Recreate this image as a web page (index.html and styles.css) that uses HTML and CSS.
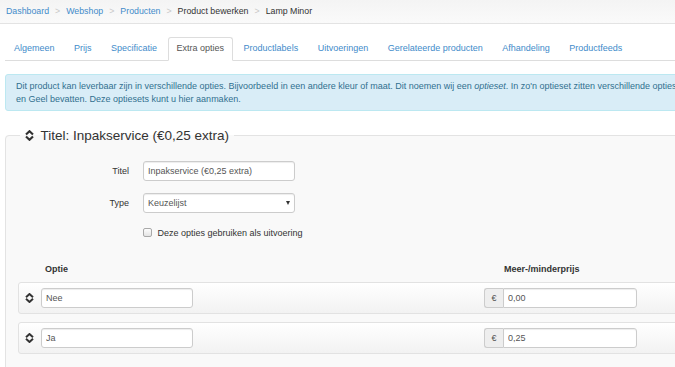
FILE: index.html
```html
<!DOCTYPE html>
<html lang="nl">
    <head>
        <meta charset="UTF-8" />
        <title>Product bewerken - Lamp Minor</title>

        <link rel="stylesheet" href="styles.css">
    </head>
    <body>
        <div class="kruimels">
            <a href="#">Dashboard</a><span class="scheiding">&gt;</span>
            <a href="#">Webshop</a><span class="scheiding">&gt;</span>
            <a href="#">Producten</a><span class="scheiding">&gt;</span>
            <span>Product bewerken</span><span class="scheiding">&gt;</span>
            <span>Lamp Minor</span>
        </div>

        <div class="pagina">
            <ul class="tabs">
                <li><a href="#">Algemeen</a></li>
                <li><a href="#">Prijs</a></li>
                <li><a href="#">Specificatie</a></li>
                <li class="actief"><a href="#">Extra opties</a></li>
                <li><a href="#">Productlabels</a></li>
                <li><a href="#">Uitvoeringen</a></li>
                <li><a href="#">Gerelateerde producten</a></li>
                <li><a href="#">Afhandeling</a></li>
                <li><a href="#">Productfeeds</a></li>
            </ul>

            <div class="melding">
                Dit product kan leverbaar zijn in verschillende opties. Bijvoorbeeld in een andere kleur of maat. Dit noemen wij een <em>optieset</em>. In zo'n optieset zitten verschillende opties, zo kan een optieset Kleur de opties Rood, Groen<br>
                en Geel bevatten. Deze optiesets kunt u hier aanmaken.
            </div>

            <fieldset class="optieset">
                <legend>
                    <svg class="greep groot" viewBox="0 0 9 11" width="9" height="11"><path d="M1 4.6 4.5 1.2 8 4.6M1 6.4 4.5 9.8 8 6.4" fill="none" stroke="#333" stroke-width="2.1"/></svg>Titel: Inpakservice (€0,25 extra)
                </legend>

                <div class="veld">
                    <label for="titel">Titel</label>
                    <input id="titel" type="text" value="Inpakservice (€0,25 extra)">
                </div>
                <div class="veld">
                    <label for="type">Type</label>
                    <span class="keuze">
                        <select id="type">
                            <option>Keuzelijst</option>
                            <option>Keuzerondjes</option>
                        </select>
                    </span>
                </div>
                <div class="vinkje">
                    <label><input type="checkbox"> Deze opties gebruiken als uitvoering</label>
                </div>

                <div class="regel kop">
                    <span></span>
                    <span class="kop-optie">Optie</span>
                    <span class="kop-prijs">Meer-/minderprijs</span>
                </div>

                <div class="regel optie">
                    <svg class="greep" viewBox="0 0 9 10" width="9" height="10"><path d="M1 4.2 4.5 1 8 4.2M1 5.8 4.5 9 8 5.8" fill="none" stroke="#333" stroke-width="2"/></svg>
                    <input type="text" value="Nee">
                    <div class="prijs"><span class="valuta">€</span><input type="text" value="0,00"></div>
                </div>
                <div class="regel optie">
                    <svg class="greep" viewBox="0 0 9 10" width="9" height="10"><path d="M1 4.2 4.5 1 8 4.2M1 5.8 4.5 9 8 5.8" fill="none" stroke="#333" stroke-width="2"/></svg>
                    <input type="text" value="Ja">
                    <div class="prijs"><span class="valuta">€</span><input type="text" value="0,25"></div>
                </div>
            </fieldset>
        </div>
    </body>
</html>
```

FILE: styles.css
```css
html {
    overflow: hidden;
}

body {
    margin: 0;
    width: 1000px;
    font-family: "Liberation Sans", Arial, sans-serif;
    font-size: 9px;
    line-height: 13px;
    color: #333;
    background: #fff;
}

a {
    color: #428bca;
    text-decoration: none;
}

/* kruimelpad */
.kruimels {
    display: flex;
    height: 23px;
    line-height: 23px;
    padding: 0 6px;
    font-size: 8.8px;
    background: linear-gradient(#f4f4f4, #fafafa);
    border-bottom: 1px solid #e3e3e3;
    white-space: nowrap;
}
.scheiding {
    color: #c8c8c8;
    padding: 0 6px;
}

.pagina {
    padding: 0 5px;
}

/* tabs */
.tabs {
    display: flex;
    list-style: none;
    margin: 13px 0 0;
    padding: 0;
    border-bottom: 1px solid #ddd;
}
.tabs li {
    margin: 0 1.5px -1px 0;
}
.tabs a {
    display: block;
    padding: 4px 8px 5px;
    border: 1px solid transparent;
    border-radius: 3px 3px 0 0;
}
.tabs .actief a {
    color: #555;
    background: #fff;
    border-color: #ddd #ddd #fff;
}

/* melding */
.melding {
    margin-top: 13px;
    padding: 5px 10px 4px;
    background: #d9edf7;
    border: 1px solid #bce8f1;
    border-radius: 3px;
    color: #31708f;
    white-space: nowrap;
}

/* optieset */
.optieset {
    margin: 16px 0 0;
    padding: 17px 12px 20px;
    min-width: 0;
    background: #f9f9f9;
    border: 1px solid #e3e3e3;
    border-radius: 4px;
}
.optieset legend {
    margin-left: 2px;
    padding: 0 5px;
    font-size: 13.5px;
    line-height: 17px;
    color: #333;
}
.greep {
    display: block;
}
.greep.groot {
    display: inline-block;
    vertical-align: -1px;
    margin-right: 6.5px;
}

input[type=text], select {
    box-sizing: border-box;
    height: 20px;
    padding: 0 4px;
    font-family: inherit;
    font-size: 9px;
    color: #555;
    background: #fff;
    border: 1px solid #ccc;
    border-radius: 3px;
    box-shadow: inset 0 1px 1px rgba(0, 0, 0, .075);
    outline: none;
}

.veld {
    display: flex;
    align-items: center;
}
.veld + .veld {
    margin-top: 12px;
}
.veld label {
    width: 111px;
    margin-right: 14px;
    text-align: right;
}
.veld input, .veld select {
    width: 152px;
}
.keuze {
    position: relative;
    display: block;
}
.keuze select {
    display: block;
    -webkit-appearance: none;
    appearance: none;
}
.keuze::after {
    content: "";
    position: absolute;
    right: 5px;
    top: 8px;
    border-left: 2.5px solid transparent;
    border-right: 2.5px solid transparent;
    border-top: 4px solid #333;
}

.vinkje {
    margin: 14px 0 0 125px;
}
.vinkje input {
    -webkit-appearance: none;
    appearance: none;
    box-sizing: border-box;
    width: 9px;
    height: 9px;
    margin: 0 3px 0 0;
    vertical-align: -1px;
    border: 1px solid #a9a9a9;
    border-radius: 2px;
    background: linear-gradient(#fdfdfd, #e4e4e4);
}

/* optieregels */
.regel {
    display: grid;
    grid-template-columns: 16px 443px 153px;
    align-items: center;
    padding: 0 6px;
    border: 1px solid transparent;
}
.kop {
    margin-top: 22px;
    margin-bottom: 5px;
    font-weight: bold;
}
.kop-optie {
    padding-left: 4px;
}
.kop-prijs {
    padding-left: 20px;
}
.optie {
    padding: 5px 6px;
    border-color: #e2e2e2;
    border-radius: 3px;
    background: linear-gradient(#fff, #f2f2f2);
}
.optie + .optie {
    margin-top: 8px;
}
.optie > input {
    width: 152px;
}

.prijs {
    display: flex;
}
.valuta {
    box-sizing: border-box;
    width: 19px;
    height: 20px;
    line-height: 18px;
    text-align: center;
    color: #555;
    background: #eee;
    border: 1px solid #ccc;
    border-right: 0;
    border-radius: 3px 0 0 3px;
}
.prijs input {
    flex: 1;
    min-width: 0;
    border-radius: 0 3px 3px 0;
}
```
